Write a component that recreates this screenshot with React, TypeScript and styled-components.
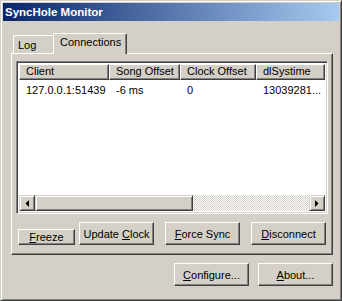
import React from "react";
import styled, { createGlobalStyle } from "styled-components";

const Global = createGlobalStyle`
  html, body { margin: 0; padding: 0; background: #d4d0c8; }
  body { font-family: Tahoma, "Liberation Sans", Arial, sans-serif; font-size: 11px; color: #000; }
  * { box-sizing: border-box; }
`;

const Window = styled.div`
  width: 342px;
  height: 301px;
  background: #d4d0c8;
  border: 1px solid;
  border-color: #d4d0c8 #404040 #404040 #d4d0c8;
  box-shadow: inset 1px 1px #fff, inset -1px -1px #808080;
  padding: 2px;
  display: flex;
  flex-direction: column;
`;

const TitleBar = styled.div`
  height: 18px;
  background: linear-gradient(to right, #0a246a, #a6caf0);
  color: #fff;
  font-weight: bold;
  font-size: 11.5px;
  display: flex;
  align-items: center;
  padding-left: 2px;
  padding-bottom: 1px;
`;

const Body = styled.div`
  padding: 12px 6px 0 8px;
  display: flex;
  flex-direction: column;
`;

const TabStrip = styled.div`
  height: 20px;
  display: flex;
  align-items: flex-end;
  padding-left: 2px;
`;

const Tab = styled.div<{ $active?: boolean }>`
  position: relative;
  z-index: ${(p) => (p.$active ? 2 : 1)};
  height: ${(p) => (p.$active ? "21px" : "18px")};
  width: ${(p) => (p.$active ? "74px" : "42px")};
  margin-left: ${(p) => (p.$active ? "-2px" : "0")};
  margin-bottom: ${(p) => (p.$active ? "-1px" : "0")};
  background: #d4d0c8;
  border-top: 1px solid #fff;
  border-left: 1px solid #fff;
  border-right: 1px solid #404040;
  box-shadow: inset -1px 0 #808080;
  border-top-left-radius: 2px;
  border-top-right-radius: 2px;
  padding: ${(p) => (p.$active ? "2px 0 0 6px" : "3px 0 0 4px")};
  line-height: 13px;
`;

const Panel = styled.div`
  height: 202px;
  border: 1px solid;
  border-color: #fff #404040 #404040 #fff;
  box-shadow: inset -1px -1px #808080;
  padding: 7px 4px 0 4px;
  display: flex;
  flex-direction: column;
`;

const ListView = styled.div`
  height: 153px;
  border: 1px solid;
  border-color: #808080 #fff #fff #808080;
  box-shadow: inset 1px 1px #404040, inset -1px -1px #d4d0c8;
  padding: 2px;
  background: #fff;
  display: flex;
  flex-direction: column;
`;

const Columns = "90px 71px 76px 1fr";

const HeaderRow = styled.div`
  display: grid;
  grid-template-columns: ${Columns};
  height: 16px;
  overflow: hidden;
`;

const HeaderCell = styled.div`
  background: #d4d0c8;
  border-top: 1px solid #fff;
  border-left: 1px solid #fff;
  border-right: 1px solid #404040;
  border-bottom: 1px solid #404040;
  box-shadow: inset -1px -1px #808080;
  padding-left: 6px;
  line-height: 13px;
  white-space: nowrap;
  overflow: hidden;
`;

const DataRow = styled.div`
  display: grid;
  grid-template-columns: ${Columns};
  height: 14px;
  margin-top: 3px;
  line-height: 14px;
`;

const DataCell = styled.div`
  padding-left: 7px;
  white-space: nowrap;
  overflow: hidden;
`;

const ListFill = styled.div`
  flex: 1;
`;

const ScrollBar = styled.div`
  height: 16px;
  display: flex;
`;

const ScrollButton = styled.div`
  width: 16px;
  height: 16px;
  background: #d4d0c8;
  border: 1px solid;
  border-color: #d4d0c8 #404040 #404040 #d4d0c8;
  box-shadow: inset 1px 1px #fff, inset -1px -1px #808080;
  display: flex;
  align-items: center;
  justify-content: center;
`;

const Thumb = styled.div`
  width: 158px;
  height: 16px;
  background: #d4d0c8;
  border: 1px solid;
  border-color: #d4d0c8 #404040 #404040 #d4d0c8;
  box-shadow: inset 1px 1px #fff, inset -1px -1px #808080;
`;

const Track = styled.div`
  flex: 1;
  background: repeating-conic-gradient(#fff 0 25%, #d4d0c8 0 50%) 0 0 / 2px 2px;
`;

const ActionRow = styled.div`
  display: flex;
  align-items: flex-end;
  gap: 11px;
  margin-top: 8px;
  padding-left: 2px;
`;

const Button = styled.button<{ $w?: number; $h?: number; $tight?: boolean }>`
  width: ${(p) => p.$w ?? 75}px;
  height: ${(p) => p.$h ?? 23}px;
  margin: 0 ${(p) => (p.$tight ? "-7px" : "0")} 0 0;
  padding: 0;
  font-family: inherit;
  font-size: 11px;
  color: #000;
  background: #d4d0c8;
  border: 1px solid;
  border-color: #fff #404040 #404040 #fff;
  box-shadow: inset -1px -1px #808080;
  line-height: 12px;
  white-space: nowrap;
`;

const FooterRow = styled.div`
  display: flex;
  justify-content: flex-end;
  gap: 9px;
  margin-top: 8px;
`;

const Arrow = ({ dir }: { dir: "left" | "right" }) => (
  <svg width="4" height="7" viewBox="0 0 4 7">
    {dir === "left" ? (
      <path d="M4 0 L4 7 L0.5 3.5 Z" fill="#000" />
    ) : (
      <path d="M0 0 L0 7 L3.5 3.5 Z" fill="#000" />
    )}
  </svg>
);

export default function App() {
  return (
    <>
      <Global />
      <Window>
        <TitleBar>SyncHole Monitor</TitleBar>
        <Body>
          <TabStrip>
            <Tab>Log</Tab>
            <Tab $active>Connections</Tab>
          </TabStrip>
          <Panel>
            <ListView>
              <HeaderRow>
                <HeaderCell>Client</HeaderCell>
                <HeaderCell>Song Offset</HeaderCell>
                <HeaderCell>Clock Offset</HeaderCell>
                <HeaderCell>dlSystime</HeaderCell>
              </HeaderRow>
              <DataRow>
                <DataCell>127.0.0.1:51439</DataCell>
                <DataCell>-6 ms</DataCell>
                <DataCell>0</DataCell>
                <DataCell>13039281...</DataCell>
              </DataRow>
              <ListFill />
              <ScrollBar>
                <ScrollButton>
                  <Arrow dir="left" />
                </ScrollButton>
                <Thumb />
                <Track />
                <ScrollButton>
                  <Arrow dir="right" />
                </ScrollButton>
              </ScrollBar>
            </ListView>
            <ActionRow>
              <Button $w={57} $h={16} $tight>
                <u>F</u>reeze
              </Button>
              <Button $h={23}>
                Update <u>C</u>lock
              </Button>
              <Button $h={23}>
                <u>F</u>orce Sync
              </Button>
              <Button $h={23}>
                <u>D</u>isconnect
              </Button>
            </ActionRow>
          </Panel>
          <FooterRow>
            <Button>
              <u>C</u>onfigure...
            </Button>
            <Button>
              <u>A</u>bout...
            </Button>
          </FooterRow>
        </Body>
      </Window>
    </>
  );
}
